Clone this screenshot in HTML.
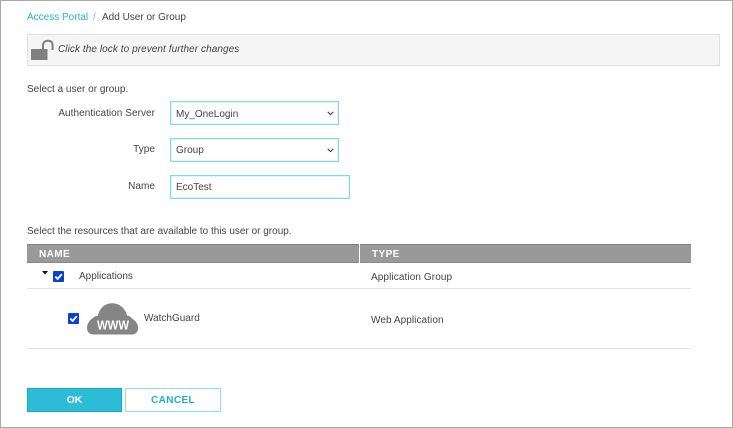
<!DOCTYPE html>
<html>
<head>
<meta charset="utf-8">
<style>
html,body{margin:0;padding:0;background:#fff}
#p{position:relative;width:733px;height:428px;overflow:hidden;background:#fff;font-family:"Liberation Sans",sans-serif;font-size:10px;color:#444}
#p div{position:absolute;box-sizing:border-box;white-space:nowrap}
.t{line-height:14px;height:14px}
.f{border:1px solid #7cdde9;box-shadow:inset 0 0 0 .5px #bdeef4;background:#fff}
.r{text-align:right;width:140px;left:15px;letter-spacing:.05px}
.cb{width:11px;height:11px;background:#0b3fd0;border-radius:1px}
</style>
</head>
<body>
<div id="p">
<div style="left:0;top:0;width:733px;height:428px;border:1px solid #a9a9a9"></div>

<div class="t" style="left:27px;top:11px;color:#22b5d3">Access Portal</div>
<div class="t" style="left:93px;top:11px;color:#aaa">/</div>
<div class="t" style="left:102px;top:11px;color:#444">Add User or Group</div>

<div style="left:27px;top:34px;width:693px;height:32px;background:#f5f5f5;border:1px solid #e0e0e0"></div>
<svg style="position:absolute;left:30px;top:39px" width="26" height="22" viewBox="0 0 26 22">
<path d="M1 10H17.5V21H1Z" fill="#808080"/>
<path d="M13 10V6.5C13 3.5 15 1.8 18 1.8C21 1.8 22.6 3.5 22.6 6.5V11" fill="none" stroke="#808080" stroke-width="2"/>
</svg>
<div class="t" style="left:58px;top:43px;font-style:italic;letter-spacing:.07px">Click the lock to prevent further changes</div>

<div class="t" style="left:27px;top:83px">Select a user or group.</div>

<div class="t r" style="top:107px">Authentication Server</div>
<div class="f" style="left:170px;top:101px;width:169px;height:24px"></div>
<div class="t" style="left:176px;top:108px">My_OneLogin</div>
<svg style="position:absolute;left:327px;top:111px" width="7" height="5" viewBox="0 0 7 5"><path d="M.7 .8L3.5 3.6L6.3 .8" fill="none" stroke="#444" stroke-width="1.1"/></svg>

<div class="t r" style="top:143px">Type</div>
<div class="f" style="left:170px;top:138px;width:169px;height:24px"></div>
<div class="t" style="left:176px;top:144px">Group</div>
<svg style="position:absolute;left:327px;top:148px" width="7" height="5" viewBox="0 0 7 5"><path d="M.7 .8L3.5 3.6L6.3 .8" fill="none" stroke="#444" stroke-width="1.1"/></svg>

<div class="t r" style="top:180px">Name</div>
<div class="f" style="left:170px;top:175px;width:180px;height:24px"></div>
<div class="t" style="left:176px;top:181px">EcoTest</div>

<div class="t" style="left:27px;top:225px">Select the resources that are available to this user or group.</div>

<div style="left:27px;top:244px;width:664px;height:19px;background:#999;border-top:1px solid #7f7f7f;border-bottom:1px solid #888"></div>
<div style="left:359px;top:244px;width:1px;height:19px;background:#fff"></div>
<div class="t" style="left:39px;top:248px;color:#fff;font-weight:bold;font-size:10px;letter-spacing:.4px">NAME</div>
<div class="t" style="left:372px;top:248px;color:#fff;font-weight:bold;font-size:10px;letter-spacing:.4px">TYPE</div>

<svg style="position:absolute;left:42px;top:271px" width="6" height="4" viewBox="0 0 6 4"><path d="M0 0H6L3 3.5Z" fill="#111"/></svg>
<div class="cb" style="left:53px;top:271px"></div>
<svg style="position:absolute;left:53px;top:271px" width="11" height="11" viewBox="0 0 11 11"><path d="M2.3 5.6L4.6 7.9L8.8 3.2" fill="none" stroke="#fff" stroke-width="1.9"/></svg>
<div class="t" style="left:79px;top:270px">Applications</div>
<div class="t" style="left:371px;top:271px;letter-spacing:.1px">Application Group</div>
<div style="left:27px;top:288px;width:664px;height:1px;background:#e2e2e2"></div>

<div class="cb" style="left:68px;top:313px"></div>
<svg style="position:absolute;left:68px;top:313px" width="11" height="11" viewBox="0 0 11 11"><path d="M2.3 5.6L4.6 7.9L8.8 3.2" fill="none" stroke="#fff" stroke-width="1.9"/></svg>
<svg style="position:absolute;left:87px;top:303px" width="52" height="32" viewBox="0 0 52 32">
<path d="M6 31.5C2.5 31.5 0 28.5 0 25C0 20.5 3 16.5 6 15C7 13.5 9 12.8 11 13C12 6 17.5 .3 25 .3C32.5 .3 38.5 5.5 40 12.5C42 12.8 44 14 45 15.5C48.5 17.5 51.2 21 51.2 25C51.2 28.5 48.5 31.5 45 31.5Z" fill="#858585"/>
<text x="26" y="26.5" text-anchor="middle" font-family="Liberation Sans" font-weight="bold" font-size="12.5" fill="#fff" textLength="32" lengthAdjust="spacingAndGlyphs">WWW</text>
</svg>
<div class="t" style="left:144px;top:312px">WatchGuard</div>
<div class="t" style="left:371px;top:314px;letter-spacing:.07px">Web Application</div>
<div style="left:27px;top:348px;width:664px;height:1px;background:#e2e2e2"></div>

<div style="left:27px;top:388px;width:95px;height:24px;background:#2bbcd8;border:1px solid #18a9c9;color:#fff;font-weight:bold;font-size:10.5px;text-align:center;line-height:22px">OK</div>
<div style="left:125px;top:388px;width:96px;height:24px;background:#fff;border:1px solid #8be0ec;color:#22aecb;font-weight:bold;font-size:10px;letter-spacing:.4px;text-align:center;line-height:24px">CANCEL</div>
</div>
</body>
</html>
